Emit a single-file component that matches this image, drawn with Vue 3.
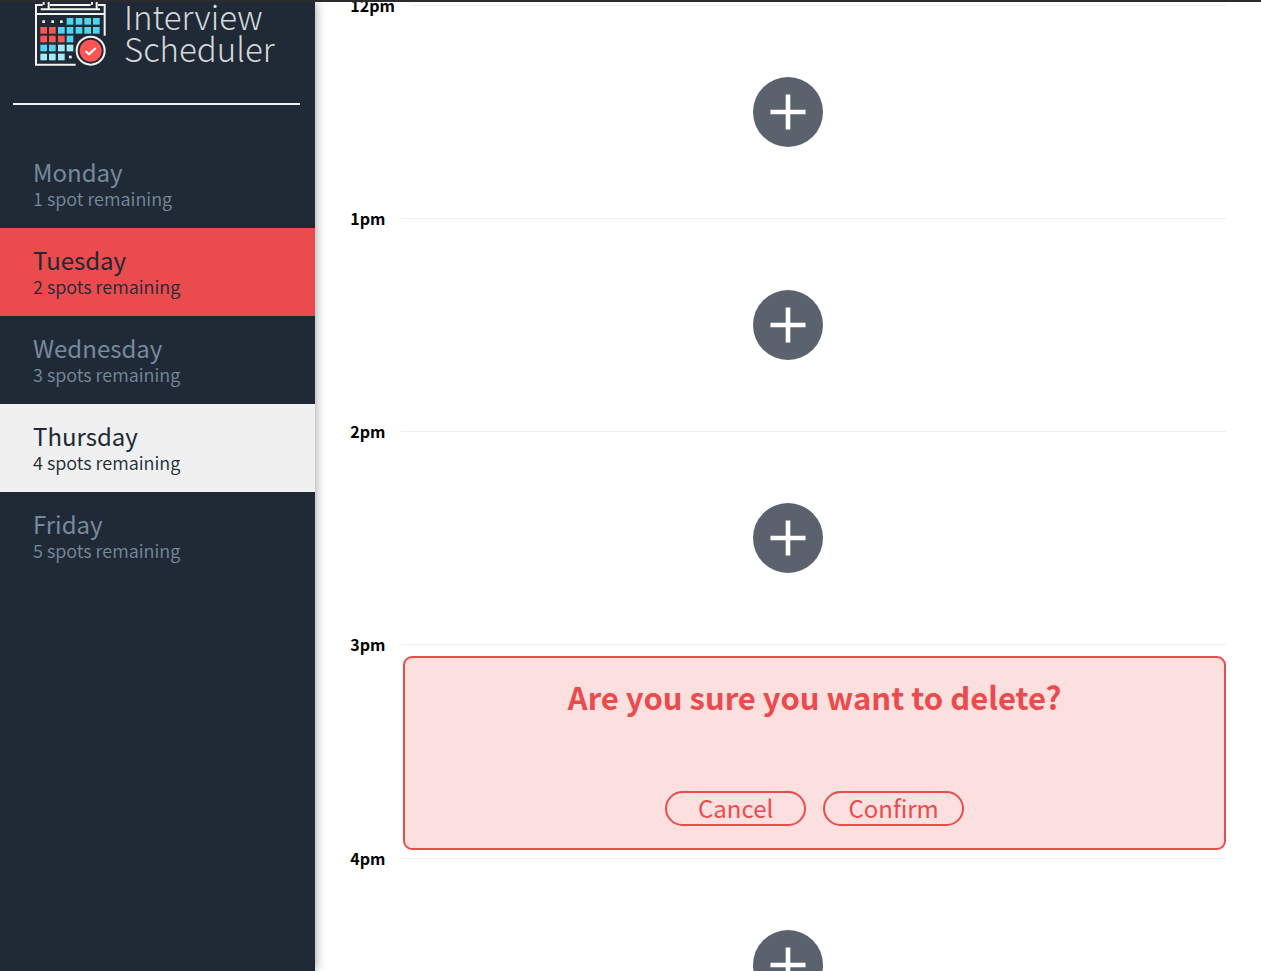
<script setup>
import { ref } from 'vue'

const days = [
  { name: 'Monday', spots: 1 },
  { name: 'Tuesday', spots: 2 },
  { name: 'Wednesday', spots: 3 },
  { name: 'Thursday', spots: 4 },
  { name: 'Friday', spots: 5 },
]
const selected = ref('Thursday')
const highlighted = ref('Tuesday')

const slots = [
  { time: '12pm', mode: 'empty' },
  { time: '1pm', mode: 'empty' },
  { time: '2pm', mode: 'empty' },
  { time: '3pm', mode: 'confirm' },
  { time: '4pm', mode: 'empty' },
]

const R = '#ff5454'
const C = '#4fd5ee'
const L = '#a0edf8'
const colours = [
  [null, null, null, C, C, C, C],
  [R, R, C, C, C, C, C],
  [R, R, R, C],
  [C, C, L, L],
  [L, L, L],
]
const cells = colours.flatMap((row, r) =>
  row.map((fill, c) => ({ fill, x: 61 + Math.round(c * 26.4), y: 54 + Math.round(r * 26.7) }))
).filter((cell) => cell.fill)

const spotsText = (n) => `${n} ${n === 1 ? 'spot' : 'spots'} remaining`
</script>

<template>
  <div class="layout">
    <aside class="sidebar">
      <div class="logo">
        <svg class="logo-icon" viewBox="45 6 213 192" aria-hidden="true">
          <g fill="none" stroke="#f4f4f2" stroke-width="6">
            <path d="M167 194H48V15H68M90 15H212M234 15H254V107" />
            <path d="M48 42H254" />
            <path d="M62 28H240" />
            <path d="M71 6V14M86 6V27M216 6V14M230 6V27" />
          </g>
          <rect v-for="(cell, i) in cells" :key="i" :x="cell.x" :y="cell.y" width="20" height="20" :fill="cell.fill" />
          <g fill="#f4f4f2">
            <rect x="67" y="61" width="8" height="8" />
            <rect x="94" y="61" width="8" height="8" />
            <rect x="120" y="61" width="8" height="8" />
            <rect x="147" y="167" width="8" height="8" />
          </g>
          <circle cx="212" cy="152" r="47" fill="#202936" />
          <circle cx="212" cy="152" r="42" fill="#202936" stroke="#f4f4f2" stroke-width="6" />
          <circle cx="212" cy="152" r="33" fill="#ff5454" />
          <path d="M197 153L207 163L227 144" fill="none" stroke="#fff" stroke-width="6" />
        </svg>
        <div class="logo-text">Interview<br />Scheduler</div>
      </div>
      <hr class="separator" />
      <nav>
        <button
          v-for="day in days"
          :key="day.name"
          type="button"
          class="day"
          :class="{ selected: day.name === selected, highlighted: day.name === highlighted }"
          @click="selected = day.name"
        >
          <span class="day-name">{{ day.name }}</span>
          <span class="day-spots">{{ spotsText(day.spots) }}</span>
        </button>
      </nav>
    </aside>

    <main class="schedule">
      <article v-for="slot in slots" :key="slot.time" class="slot">
        <header class="slot-header">
          <h4>{{ slot.time }}</h4>
          <hr />
        </header>
        <section v-if="slot.mode === 'confirm'" class="confirm">
          <h1>Are you sure you want to delete?</h1>
          <div class="actions">
            <button type="button">Cancel</button>
            <button type="button">Confirm</button>
          </div>
        </section>
        <div v-else class="empty">
          <button type="button" class="add" aria-label="Add">
            <svg viewBox="0 0 70 70" aria-hidden="true">
              <circle cx="35" cy="35" r="35" fill="#5a626e" />
              <path d="M35 17.5V52.5M17.5 35H52.5" stroke="#fff" stroke-width="4.6" />
            </svg>
          </button>
        </div>
      </article>
    </main>
  </div>
</template>

<style>
body {
  margin: 0;
  background: #fff;
}
</style>

<style scoped>
.layout {
  box-sizing: border-box;
  display: flex;
  height: 100vh;
  overflow: hidden;
  border-top: 2px solid #2c2b2e;
  font-family: "Noto Sans CJK SC", "Open Sans", sans-serif;
}
.sidebar {
  flex: 0 0 25%;
  background: #202936;
  box-shadow: 0 0 10px rgba(32, 41, 54, 0.5);
}
.logo {
  display: flex;
  gap: 18px;
  padding-left: 35px;
  height: 101px;
}
.logo-icon {
  width: 71px;
  height: 64px;
}
.logo-text {
  margin-top: -2px;
  color: #d4d8da;
  font-size: 33px;
  font-weight: 300;
  line-height: 32px;
}
.separator {
  height: 2px;
  margin: 0 15px 35px 13px;
  border: 0;
  background: #f0f0f3;
}
.day {
  display: flex;
  flex-direction: column;
  justify-content: center;
  width: 100%;
  height: 88px;
  padding: 0 33px;
  border: 0;
  background: transparent;
  color: #768a9e;
  font-family: inherit;
  text-align: left;
  cursor: pointer;
}
.day-name {
  font-size: 24px;
  font-weight: 400;
  line-height: 28px;
}
.day-spots {
  font-size: 18px;
  font-weight: 350;
  line-height: 24px;
}
.selected {
  background: #f0f0f0;
  color: #202936;
}
.highlighted {
  background: #ea4b4d;
  color: #202936;
}
.schedule {
  flex: 1;
  padding: 0 35px;
  margin-top: -5px;
}
.slot {
  display: flex;
  flex-direction: column;
  min-height: 213px;
}
.slot-header {
  display: flex;
  align-items: center;
  gap: 16px;
  height: 16px;
}
.slot-header h4 {
  margin: 0;
  font-size: 16px;
  font-weight: 700;
  line-height: 16px;
}
.slot-header hr {
  flex: 1;
  height: 1px;
  margin: 0;
  border: 0;
  background: #efefef;
}
.empty {
  display: flex;
  flex: 1;
  align-items: center;
  justify-content: center;
}
.add {
  width: 70px;
  height: 70px;
  padding: 0;
  border: 0;
  border-radius: 50%;
  background: transparent;
  cursor: pointer;
}
.add svg {
  display: block;
}
.confirm {
  box-sizing: border-box;
  display: flex;
  flex: 0 0 194px;
  flex-direction: column;
  align-items: center;
  justify-content: space-between;
  margin: 4px 0 0 53px;
  padding: 15px 0 22px;
  border: 2px solid #ea4b4d;
  border-radius: 9px;
  background: #fce0e0;
  color: #ea4b4d;
}
.confirm h1 {
  margin: 0;
  font-size: 31px;
  font-weight: 700;
  line-height: 48px;
}
.actions {
  display: flex;
  gap: 17px;
}
.actions button {
  width: 141px;
  height: 35px;
  padding: 0 0 2px;
  border: 2px solid #ea4b4d;
  border-radius: 18px;
  background: transparent;
  color: #ea4b4d;
  font-family: inherit;
  font-size: 24px;
  font-weight: 400;
  line-height: 29px;
  cursor: pointer;
}
</style>
